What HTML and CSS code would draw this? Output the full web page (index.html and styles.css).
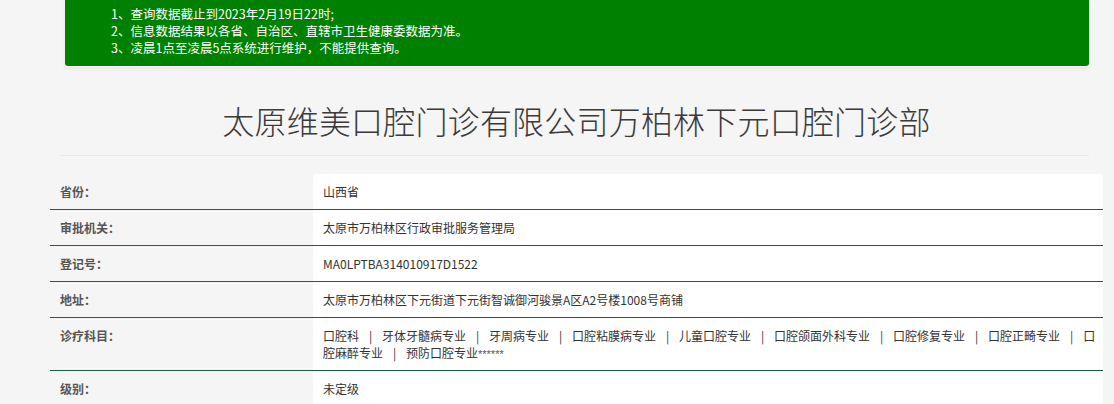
FILE: index.html
```html
<!DOCTYPE html>
<html lang="zh-CN">
<head>
<meta charset="utf-8">
<title>太原维美口腔门诊有限公司万柏林下元口腔门诊部</title>
<link rel="stylesheet" href="styles.css">
</head>
<body>
<div class="wrap">
  <div class="notice">
    <p>1、查询数据截止到2023年2月19日22时;</p>
    <p>2、信息数据结果以各省、自治区、直辖市卫生健康委数据为准。</p>
    <p>3、凌晨1点至凌晨5点系统进行维护，不能提供查询。</p>
  </div>
  <h1 class="title">太原维美口腔门诊有限公司万柏林下元口腔门诊部</h1>
  <hr class="divider">
  <table class="info">
    <tr><th>省份：</th><td>山西省</td></tr>
    <tr><th>审批机关：</th><td>太原市万柏林区行政审批服务管理局</td></tr>
    <tr><th>登记号：</th><td>MA0LPTBA314010917D1522</td></tr>
    <tr><th>地址：</th><td>太原市万柏林区下元街道下元街智诚御河骏景A区A2号楼1008号商铺</td></tr>
    <tr><th>诊疗科目：</th><td><span class="item">口腔科</span><span class="sep">|</span><span class="item">牙体牙髓病专业</span><span class="sep">|</span><span class="item">牙周病专业</span><span class="sep">|</span><span class="item">口腔粘膜病专业</span><span class="sep">|</span><span class="item">儿童口腔专业</span><span class="sep">|</span><span class="item">口腔颌面外科专业</span><span class="sep">|</span><span class="item">口腔修复专业</span><span class="sep">|</span><span class="item">口腔正畸专业</span><span class="sep">|</span><span class="item">口</span><span class="item">腔麻醉专业</span><span class="sep">|</span><span class="item">预防口腔专业</span><span class="stars">******</span></td></tr>
    <tr><th>级别：</th><td>未定级</td></tr>
  </table>
</div>
</body>
</html>
```

FILE: styles.css
```css
html, body {
  margin: 0;
  padding: 0;
  background: #f5f5f5;
  font-family: "Noto Sans CJK SC", "Microsoft YaHei", sans-serif;
  color: #333;
}

.wrap {
  width: 1053px;
  margin-left: 50px;
}

.notice {
  margin: 0 14px 0 15px;
  background: #008000;
  color: #fff;
  font-size: 12.5px;
  line-height: 17px;
  padding: 5px 0 10px 46px;
  border-radius: 0 0 3px 3px;
  box-shadow: 0 1px 0 #ffffff, 0 3px 3px rgba(230, 200, 200, 0.35);
}

.notice p {
  margin: 0;
}

.title {
  margin: 32px 0 0;
  font-size: 32px;
  line-height: 44px;
  font-weight: 300;
  letter-spacing: 0.2px;
  text-align: center;
  color: #3a3a3a;
}

.divider {
  margin: 13px 14px 0 10px;
  border: 0;
  border-top: 1px solid #e9e9e9;
  height: 0;
}

.info {
  margin-top: 18px;
  width: 1053px;
  border-collapse: collapse;
  font-size: 12px;
  line-height: 17px;
}

.info th,
.info td {
  padding: 9px 6px 9px 10px;
  border-bottom: 1px solid #1f5c48;
  vertical-align: top;
  text-align: left;
}

.info th {
  width: 247px;
  font-weight: bold;
  color: #555;
  background: transparent;
}

.info td {
  background: #fff;
  color: #333;
}

.sep {
  display: inline-block;
  width: 23px;
  height: 17px;
  vertical-align: top;
  text-align: center;
}

.stars {
  font-family: "Liberation Sans", Arial, sans-serif;
  font-size: 11px;
  line-height: 1;
  color: #555;
}
```
